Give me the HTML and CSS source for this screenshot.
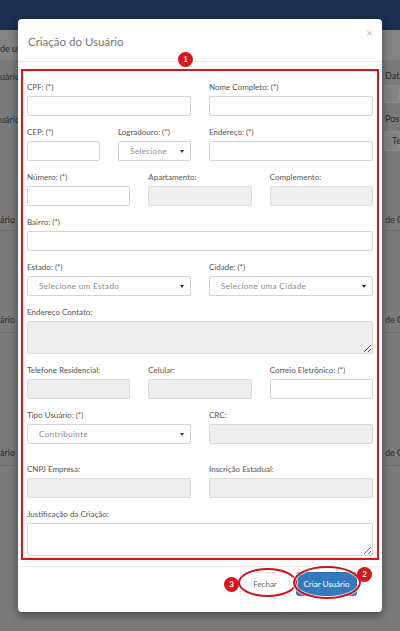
FILE: index.html
```html
<!DOCTYPE html>
<html lang="pt-BR">
<head>
<meta charset="utf-8">
<title>Criação do Usuário</title>
<link rel="stylesheet" href="styles.css">
</head>
<body>
<div class="navbar"></div>
<div class="bg-body">
  <div class="strip left">
    <div class="cell cell-a">de us</div>
    <div class="cell cell-b">uário:</div>
    <div class="cell cell-c">uário</div>
    <div class="cell cell-d line">ário</div>
    <div class="cell cell-e line">ário</div>
    <div class="cell cell-f line">ário</div>
  </div>
  <div class="strip right">
    <div class="cell cell-a"></div>
    <div class="cell cell-rb">Data<div class="bg-box"></div></div>
    <div class="cell cell-rc">Post<div class="bg-box tall">Te</div></div>
    <div class="cell cell-d line">de Or</div>
    <div class="cell cell-e line">de Or</div>
    <div class="cell cell-f line">de Or</div>
  </div>
</div>

<div class="modal">
  <div class="modal-header">
    <h4 class="modal-title">Criação do Usuário</h4>
    <span class="close">×</span>
  </div>
  <div class="modal-body">
    <div class="form-box">
      <div class="row">
        <div class="field"><label>CPF: (*)</label><input class="input" type="text"></div>
        <div class="field"><label>Nome Completo: (*)</label><input class="input" type="text"></div>
      </div>
      <div class="row">
        <div class="field quarter"><label>CEP: (*)</label><input class="input" type="text"></div>
        <div class="field quarter"><label>Logradouro: (*)</label><div class="select">Selecione<span class="caret"></span></div></div>
        <div class="field"><label>Endereço: (*)</label><input class="input" type="text"></div>
      </div>
      <div class="row">
        <div class="field"><label>Número: (*)</label><input class="input" type="text"></div>
        <div class="field"><label>Apartamento:</label><input class="input" type="text" disabled></div>
        <div class="field"><label>Complemento:</label><input class="input" type="text" disabled></div>
      </div>
      <div class="row">
        <div class="field"><label>Bairro: (*)</label><input class="input" type="text"></div>
      </div>
      <div class="row">
        <div class="field"><label>Estado: (*)</label><div class="select">Selecione um Estado<span class="caret"></span></div></div>
        <div class="field"><label>Cidade: (*)</label><div class="select">Selecione uma Cidade<span class="caret"></span></div></div>
      </div>
      <div class="row">
        <div class="field"><label>Endereço Contato:</label><textarea class="textarea" disabled></textarea></div>
      </div>
      <div class="row">
        <div class="field"><label>Telefone Residencial:</label><input class="input" type="text" disabled></div>
        <div class="field"><label>Celular:</label><input class="input" type="text" disabled></div>
        <div class="field"><label>Correio Eletrônico: (*)</label><input class="input" type="text"></div>
      </div>
      <div class="row extra">
        <div class="field"><label>Tipo Usuário: (*)</label><div class="select">Contribuinte<span class="caret"></span></div></div>
        <div class="field"><label>CRC:</label><input class="input" type="text" disabled></div>
      </div>
      <div class="row">
        <div class="field"><label>CNPJ Empresa:</label><input class="input" type="text" disabled></div>
        <div class="field"><label>Inscrição Estadual:</label><input class="input" type="text" disabled></div>
      </div>
      <div class="row">
        <div class="field"><label>Justificação da Criação:</label><textarea class="textarea"></textarea></div>
      </div>
    </div>
  </div>
  <div class="modal-footer">
    <button class="btn btn-default">Fechar</button>
    <button class="btn btn-primary">Criar Usuário</button>
  </div>

  <span class="badge b1">1</span>
  <span class="ring ring-fechar"></span>
  <span class="ring ring-criar"></span>
  <span class="badge b3">3</span>
  <span class="badge b2">2</span>
</div>
</body>
</html>
```
FILE: styles.css
```css
* { box-sizing: border-box; }

html, body {
  margin: 0;
  padding: 0;
}

body {
  width: 400px;
  height: 631px;
  overflow: hidden;
  position: relative;
  background: #7a7a7a;
  font-family: Lato, "Open Sans", "Liberation Sans", sans-serif;
}

/* ---------- dimmed page behind the modal ---------- */
.navbar {
  height: 30px;
  background: #1c2f50;
}

.bg-body {
  display: flex;
  justify-content: space-between;
}

.strip {
  width: 18px;
  overflow: hidden;
  white-space: nowrap;
  display: flex;
  flex-direction: column;
  font-size: 9px;
  line-height: 12px;
  color: #2c2c2c;
}

.strip.right .cell { padding-left: 3px; }

.cell { flex: 0 0 auto; }
.cell-a { height: 30px; padding-top: 13px; background: #838383; }
.cell-b { height: 40px; padding-top: 11px; }
.cell-c { height: 100px; padding-top: 14px; }
.cell-d { height: 31px; padding-top: 14px; }
.cell-e { height: 102px; padding-top: 83px; }
.cell-f { height: 133px; padding-top: 114px; }
.cell-rb { height: 46px; padding-top: 10px; }
.cell-rc { height: 94px; padding-top: 7px; }
.line { border-bottom: 1px solid #6c6c6c; }

.bg-box {
  height: 18px;
  margin-top: 3px;
  margin-left: -1px;
  background: #828282;
  border: 1px solid #8c8c8c;
  border-radius: 2px;
  padding-left: 7px;
  line-height: 16px;
}
.bg-box.tall { height: 20px; margin-top: 6px; line-height: 18px; }

/* ---------- modal ---------- */
.modal {
  position: absolute;
  left: 18px;
  top: 19px;
  width: 364px;
  height: 593px;
  background: #fff;
  border-radius: 4px;
  box-shadow: 0 3px 9px rgba(0, 0, 0, 0.45);
}

.modal-header {
  height: 43px;
  border-bottom: 1px solid #e8e8e8;
  padding: 0 10px;
  display: flex;
  justify-content: space-between;
  align-items: center;
}

.modal-title {
  margin: 0;
  font-size: 11.5px;
  font-weight: 400;
  color: #777;
  padding-top: 2px;
}

.close {
  align-self: flex-start;
  margin-top: 7px;
  margin-right: -1px;
  font-size: 12px;
  line-height: 14px;
  color: #c9c9c9;
}

.modal-body {
  padding: 7px 3px 6px;
}

.form-box {
  border: 2px solid #d5171d;
  box-shadow: inset 0 0 0 1px #f3f3f3;
  padding: 11px 4px 2px;
}

.row {
  display: flex;
  gap: 18px;
  margin-bottom: 11px;
}
.row:last-child { margin-bottom: 0; }
.row.extra { margin-bottom: 20px; }

.field {
  flex: 1 1 0;
  min-width: 0;
}
.field.quarter { flex: 0 0 73px; }

label {
  display: block;
  font-size: 8px;
  font-weight: 400;
  line-height: 10px;
  margin-bottom: 4px;
  color: #555;
  white-space: nowrap;
}

.input, .textarea, .select {
  display: block;
  width: 100%;
  border: 1px solid #d4d4d4;
  border-radius: 2px;
  background: #fff;
  margin: 0;
  font-family: inherit;
}

.input { height: 20px; padding: 0 6px; }

.input:disabled, .textarea:disabled {
  background: #eeeeee;
  border-color: #d9d9d9;
}

.textarea {
  height: 33px;
  resize: vertical;
}

.select {
  height: 20px;
  display: flex;
  align-items: center;
  justify-content: space-between;
  padding: 0 6px 0 11px;
  font-size: 8px;
  font-weight: 400;
  color: #8a8a8a;
  letter-spacing: 0.4px;
  white-space: nowrap;
}

.caret {
  width: 0;
  height: 0;
  border-left: 2.5px solid transparent;
  border-right: 2.5px solid transparent;
  border-top: 3.5px solid #333;
}

.modal-footer {
  border-top: 1px solid #e8e8e8;
  padding: 5px 25px 0 0;
  display: flex;
  justify-content: flex-end;
  gap: 6px;
}

.btn {
  height: 24px;
  border-radius: 3px;
  font-family: inherit;
  font-size: 8px;
  font-weight: 400;
  padding: 0;
  margin: 0;
}

.btn-default {
  width: 50px;
  background: #fff;
  border: 1px solid #e6e6e6;
  color: #666;
}

.btn-primary {
  width: 61px;
  background: #3579bd;
  border: 1px solid #2f6ca8;
  color: #fff;
}

/* ---------- annotation overlays ---------- */
.badge {
  position: absolute;
  width: 15px;
  height: 15px;
  border-radius: 50%;
  background: #d7161c;
  color: #fff;
  font-size: 8px;
  font-weight: 700;
  line-height: 15px;
  text-align: center;
}
.b1 { left: 160px; top: 33px; }
.b3 { left: 206px; top: 558px; }
.b2 { left: 339px; top: 548px; }

.ring {
  position: absolute;
  border: 2px solid #cf151b;
  border-radius: 50%;
  box-shadow: 0 0 0 1px rgba(255, 255, 255, 0.9), inset 0 0 0 1px rgba(255, 255, 255, 0.8);
}
.ring-fechar { left: 220px; top: 549px; width: 59px; height: 29px; }
.ring-criar { left: 275px; top: 547px; width: 68px; height: 33px; }
```
